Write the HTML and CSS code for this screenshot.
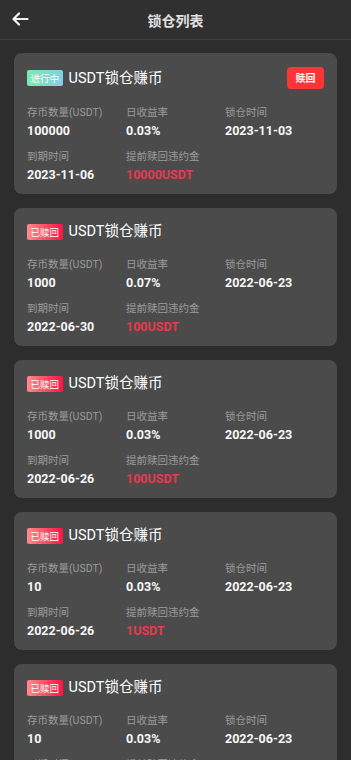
FILE: index.html
```html
<!DOCTYPE html>
<html lang="zh-CN">
<head>
    <meta charset="UTF-8">
    <meta name="viewport" content="width=device-width, initial-scale=1.0">
    <link rel="stylesheet" href="styles.css">
    <title>锁仓列表</title>
</head>
<body>
    <div class="header">
        <svg class="back" width="18" height="14" viewBox="0 0 18 14">
            <path d="M8 1.5 L2.5 7 L8 12.5 M2.5 7 H16.5" fill="none" stroke="#f2f2f2" stroke-width="2.2" stroke-linecap="round" stroke-linejoin="round"/>
        </svg>
        <div class="title">锁仓列表</div>
    </div>

    <div class="list">
        <div class="card">
            <div class="card-head">
                <span class="tag tag-on">进行中</span>
                <span class="name">USDT锁仓赚币</span>
                <span class="redeem">赎回</span>
            </div>
            <div class="info">
                <div><div class="label">存币数量(USDT)</div><div class="value">100000</div></div>
                <div><div class="label">日收益率</div><div class="value">0.03%</div></div>
                <div><div class="label">锁仓时间</div><div class="value">2023-11-03</div></div>
                <div><div class="label">到期时间</div><div class="value">2023-11-06</div></div>
                <div><div class="label">提前赎回违约金</div><div class="value red">10000USDT</div></div>
            </div>
        </div>

        <div class="card">
            <div class="card-head">
                <span class="tag tag-off">已赎回</span>
                <span class="name">USDT锁仓赚币</span>
            </div>
            <div class="info">
                <div><div class="label">存币数量(USDT)</div><div class="value">1000</div></div>
                <div><div class="label">日收益率</div><div class="value">0.07%</div></div>
                <div><div class="label">锁仓时间</div><div class="value">2022-06-23</div></div>
                <div><div class="label">到期时间</div><div class="value">2022-06-30</div></div>
                <div><div class="label">提前赎回违约金</div><div class="value red">100USDT</div></div>
            </div>
        </div>

        <div class="card">
            <div class="card-head">
                <span class="tag tag-off">已赎回</span>
                <span class="name">USDT锁仓赚币</span>
            </div>
            <div class="info">
                <div><div class="label">存币数量(USDT)</div><div class="value">1000</div></div>
                <div><div class="label">日收益率</div><div class="value">0.03%</div></div>
                <div><div class="label">锁仓时间</div><div class="value">2022-06-23</div></div>
                <div><div class="label">到期时间</div><div class="value">2022-06-26</div></div>
                <div><div class="label">提前赎回违约金</div><div class="value red">100USDT</div></div>
            </div>
        </div>

        <div class="card">
            <div class="card-head">
                <span class="tag tag-off">已赎回</span>
                <span class="name">USDT锁仓赚币</span>
            </div>
            <div class="info">
                <div><div class="label">存币数量(USDT)</div><div class="value">10</div></div>
                <div><div class="label">日收益率</div><div class="value">0.03%</div></div>
                <div><div class="label">锁仓时间</div><div class="value">2022-06-23</div></div>
                <div><div class="label">到期时间</div><div class="value">2022-06-26</div></div>
                <div><div class="label">提前赎回违约金</div><div class="value red">1USDT</div></div>
            </div>
        </div>

        <div class="card">
            <div class="card-head">
                <span class="tag tag-off">已赎回</span>
                <span class="name">USDT锁仓赚币</span>
            </div>
            <div class="info">
                <div><div class="label">存币数量(USDT)</div><div class="value">10</div></div>
                <div><div class="label">日收益率</div><div class="value">0.03%</div></div>
                <div><div class="label">锁仓时间</div><div class="value">2022-06-23</div></div>
                <div><div class="label">到期时间</div><div class="value">2022-06-26</div></div>
                <div><div class="label">提前赎回违约金</div><div class="value red">1USDT</div></div>
            </div>
        </div>
    </div>
</body>
</html>
```

FILE: styles.css
```css
body {
    margin: 0;
    background-color: #2d2d2d;
    font-family: Roboto, "Noto Sans CJK SC", sans-serif;
    color: #f2f2f2;
}

.header {
    height: 39px;
    display: flex;
    align-items: center;
    justify-content: center;
    position: relative;
    background-color: #303030;
    border-bottom: 1px solid #3e3e3e;
}

.back {
    position: absolute;
    left: 11px;
    top: 12px;
}

.title {
    font-size: 14px;
    font-weight: bold;
    color: #e0e0e0;
}

.list {
    display: flex;
    flex-direction: column;
    gap: 14px;
    padding: 13px 14px;
}

.card {
    background-color: #4b4b4b;
    border-radius: 8px;
    padding: 14px 13px 11px;
}

.card-head {
    min-height: 19px;
    display: flex;
    align-items: center;
}

.tag {
    height: 16px;
    line-height: 16px;
    padding: 0 3.5px;
    border-radius: 2px;
    font-size: 9.5px;
    color: #fff;
    font-family: "Noto Sans CJK SC", sans-serif;
}

.tag-on {
    background: linear-gradient(90deg, #7ee8b0, #84cfe6);
}

.tag-off {
    background: linear-gradient(90deg, #ff8a8a, #ff1244);
}

.name {
    margin-left: 6px;
    font-size: 14.5px;
    line-height: 19px;
    color: #fff;
}

.redeem {
    margin-left: auto;
    width: 37px;
    height: 22px;
    line-height: 22px;
    text-align: center;
    background-color: #ff3434;
    border-radius: 4px;
    font-size: 10px;
    font-weight: bold;
    color: #fff;
    font-family: "Noto Sans CJK SC", sans-serif;
}

.info {
    margin-top: 17px;
    display: grid;
    grid-template-columns: repeat(3, 1fr);
    row-gap: 11px;
}

.label {
    font-size: 10.5px;
    line-height: 14px;
    color: #9b9b9b;
}

.value {
    margin-top: 3px;
    font-size: 12.5px;
    line-height: 16px;
    font-weight: bold;
    color: #f7f7f7;
}

.value.red {
    color: #e8394f;
}
```
